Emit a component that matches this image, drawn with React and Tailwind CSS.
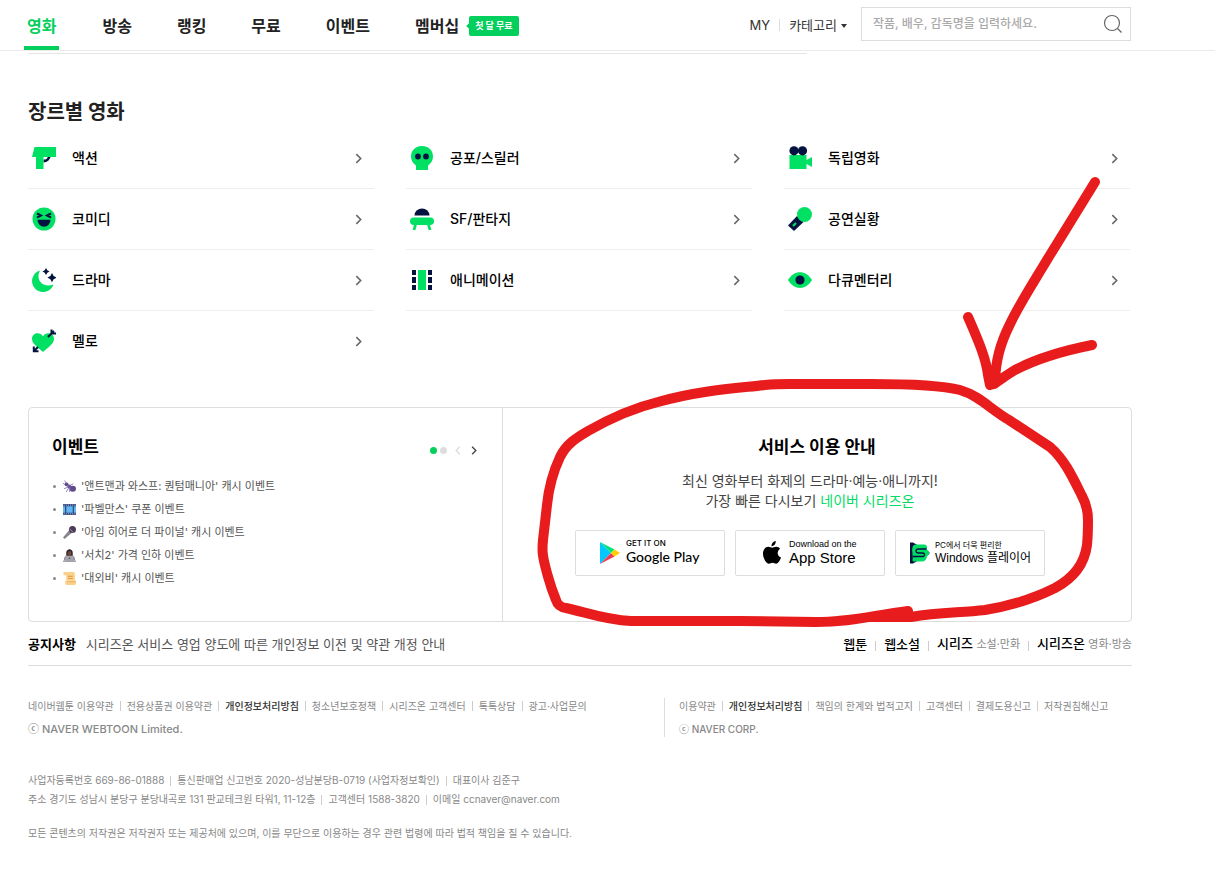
import React from "react";

const navItems = ["방송", "랭킹", "무료", "이벤트"];

const Svg = ({ children, className = "h-6 w-6" }) => (
  <svg viewBox="0 0 24 24" className={className} aria-hidden="true">
    {children}
  </svg>
);

const icons = {
  action: (
    <Svg>
      <path d="M17.500 9.500a6 6 0 0 1-6 5.500" fill="none" stroke="#03123f" strokeWidth="2.800" />
      <path d="M2.500 1H24v10H11.500v12H4V11H0z" fill="#00e164" />
    </Svg>
  ),
  comedy: (
    <Svg>
      <circle cx="12" cy="12" r="11.500" fill="#00e164" />
      <path d="M5.500 12.800h13a6.500 7 0 0 1-13 0z" fill="#03123f" />
      <path d="M5 6.500l4 2-4 2M19 6.500l-4 2 4 2" fill="none" stroke="#03123f" strokeWidth="2" />
    </Svg>
  ),
  drama: (
    <Svg>
      <path d="M8 2.500a11 11 0 1 0 13.500 14C11 20.500 3 12 8 2.500z" fill="#00e164" />
      <path d="M14 0l1.300 2.200L17.500 3.500l-2.200 1.300L14 7l-1.300-2.200-2.200-1.300 2.200-1.300zM20 5l1.600 3 3 1.600-3 1.600-1.600 3-1.600-3-3-1.600 3-1.600z" fill="#03123f" />
    </Svg>
  ),
  melo: (
    <Svg>
      <path d="M11 23C6 18.500 0 15 0 9.800c0-6 8-7.500 11-2.500C14 2.300 22 3.800 22 9.800c0 5.200-6 8.700-11 13.200z" fill="#00e164" />
      <path d="M16 8l6-6M19.500 0.500v4H24M6 18l-4 4M1.800 17.500v4.700h4.700" fill="none" stroke="#03123f" strokeWidth="2" />
    </Svg>
  ),
  horror: (
    <Svg>
      <path d="M12 0c6.500 0 11 4.500 11 10.500 0 4-2 7-5 9V24H6v-4.500c-3-2-5-5-5-9C1 4.500 5.500 0 12 0z" fill="#00e164" />
      <circle cx="8" cy="10.500" r="2.900" fill="#03123f" />
      <circle cx="16" cy="10.500" r="2.900" fill="#03123f" />
    </Svg>
  ),
  sf: (
    <Svg>
      <path d="M4.500 8.500a7.500 7 0 0 1 15 0z" fill="#03123f" />
      <rect x="0" y="10.500" width="24" height="7.500" rx="3.750" fill="#00e164" />
      <path d="M5.800 16.500L4 23M18.200 16.500L20 23" stroke="#00e164" strokeWidth="2.800" />
    </Svg>
  ),
  animation: (
    <Svg>
      <path d="M8 2h8v20H8z" fill="#00e164" />
      <path d="M2 2h4v5H2zM2 9h4v6H2zM2 17h4v5H2zM18 2h4v5h-4zM18 9h4v6h-4zM18 17h4v5h-4z" fill="#03123f" />
    </Svg>
  ),
  indie: (
    <Svg>
      <path d="M1.500 9h17v5L24 11v10l-5.500-3v5h-17z" fill="#00e164" />
      <circle cx="6" cy="4.800" r="4.600" fill="#03123f" />
      <circle cx="14.500" cy="4.800" r="4.600" fill="#03123f" />
    </Svg>
  ),
  concert: (
    <Svg>
      <path d="M0 18.500L9 9l6.500 6L6 24z" fill="#03123f" />
      <path d="M5 19l3-3" stroke="#00e164" strokeWidth="2.200" />
      <circle cx="16.500" cy="7.500" r="7.500" fill="#00e164" />
    </Svg>
  ),
  documentary: (
    <Svg>
      <path d="M0 12C6 1.500 18 1.500 24 12 18 22.500 6 22.500 0 12z" fill="#00e164" />
      <circle cx="12" cy="12" r="4.600" fill="#03123f" />
    </Svg>
  ),
};

const genres = [
  { name: "액션", icon: "action" },
  { name: "공포/스릴러", icon: "horror" },
  { name: "독립영화", icon: "indie" },
  { name: "코미디", icon: "comedy" },
  { name: "SF/판타지", icon: "sf" },
  { name: "공연실황", icon: "concert" },
  { name: "드라마", icon: "drama" },
  { name: "애니메이션", icon: "animation" },
  { name: "다큐멘터리", icon: "documentary" },
  { name: "멜로", icon: "melo" },
];

const events = [
  {
    text: "'앤트맨과 와스프: 퀀텀매니아' 캐시 이벤트",
    icon: (
      <>
        <circle cx="6.500" cy="8" r="3.500" fill="#5f4b8b" />
        <circle cx="11.500" cy="12" r="3.500" fill="#6b559b" />
        <ellipse cx="18" cy="16" rx="6" ry="5.500" fill="#5f4b8b" />
        <path d="M6 6L3 1M3 8L0 6M10 13l-8 3M11 14l-5 8M13 14l-1 8M13 10l6-3" fill="none" stroke="#7d6ba6" strokeWidth="1.500" />
      </>
    ),
  },
  {
    text: "'파벨만스' 쿠폰 이벤트",
    icon: (
      <>
        <path d="M0 2h24v20H0z" fill="#283c78" />
        <path d="M6 6h12v12H6zM0 6h4v12H0zM20 6h4v12h-4z" fill="#62b5ee" />
        <path d="M1 4h22M1 20h22" stroke="#d9e8f5" strokeWidth="1.500" strokeDasharray="2 2" />
      </>
    ),
  },
  {
    text: "'아임 히어로 더 파이널' 캐시 이벤트",
    icon: (
      <>
        <path d="M0 21L12 7l5 5L3 24z" fill="#8b8590" />
        <circle cx="17.500" cy="6.500" r="6.500" fill="#4b3b58" />
        <path d="M12 5l7 7" stroke="#b8aec2" strokeWidth="1.500" />
      </>
    ),
  },
  {
    text: "'서치2' 가격 인하 이벤트",
    icon: (
      <>
        <path d="M2 21c0-8 3-10 10-10s10 2 10 10z" fill="#77747f" />
        <path d="M6 12V7c0-9 12-9 12 0v5z" fill="#2e2528" />
        <ellipse cx="12" cy="8" rx="3.500" ry="4.500" fill="#70483a" />
        <path d="M4 13h16v8H4zM0 21h24v3H0z" fill="#a5a3ad" />
        <circle cx="12" cy="17" r="1.500" fill="#4f4d58" />
      </>
    ),
  },
  {
    text: "'대외비' 캐시 이벤트",
    icon: (
      <>
        <path d="M1 0h18c3 0 3 3 3 5v11H6V6H1z" fill="#fbd08b" />
        <path d="M4 16h20v4c0 3-1 4-3 4H8c-3 0-4-1-4-4z" fill="#fbd08b" />
        <path d="M9 8h9M9 12h9" stroke="#e2a04c" strokeWidth="2" />
        <path d="M8 18h16" stroke="#efb463" strokeWidth="2" />
      </>
    ),
  },
];

const Chevron = ({ className, left }) => (
  <svg viewBox="0 0 8 12" className={className} aria-hidden="true">
    <path d={left ? "M6.500 1L1.500 6l5 5" : "M1.500 1l5 5-5 5"} fill="none" stroke="currentColor" strokeWidth="1.800" />
  </svg>
);

function Header() {
  return (
    <header className="flex h-[51px] items-center border-b border-[#ebebeb] pr-[84px] pl-6">
      <nav className="flex h-full items-center text-[16px] font-bold text-[#222]">
        <a href="#movie" className="mr-[43px] flex h-full items-center border-b-4 border-[#03cf5d] px-[3px] pt-1.5 text-[#03cf5d]">
          영화
        </a>
        {navItems.map((item) => (
          <a key={item} href="#nav" className="mr-[45px] pt-0.5">
            {item}
          </a>
        ))}
        <a href="#membership" className="pt-0.5">멤버십</a>
        <span className="relative mt-0.5 ml-[10px] flex h-5 items-center rounded-xs bg-[#03cf5d] px-[6px] text-[9px] text-white">
          <i className="absolute -left-0.5 h-1 w-1 rotate-45 bg-[#03cf5d]" />
          첫 달 무료
        </span>
      </nav>
      <div className="ml-auto flex items-center text-[13px] text-[#333]">
        <a href="#my" className="pt-0.5">MY</a>
        <span className="mx-[9px] h-3 w-px bg-[#ddd]" />
        <button className="flex items-center gap-1 pt-0.5">
          카테고리
          <svg viewBox="0 0 6 4" className="h-1 w-1.5" aria-hidden="true">
            <path d="M0 0h6L3 4z" fill="#333" />
          </svg>
        </button>
        <form className="mb-0.5 ml-[14px] flex h-[34px] w-[270px] items-center border border-[#ddd] px-[11px]">
          <input
            type="text"
            aria-label="검색"
            placeholder="작품, 배우, 감독명을 입력하세요."
            className="min-w-0 flex-1 text-[12px] font-medium outline-none placeholder:text-[#aaa]"
          />
          <button type="button" aria-label="검색하기" className="-mr-1">
            <svg viewBox="0 0 20 20" className="h-5 w-5" fill="none" stroke="#666" strokeWidth="1.200">
              <circle cx="9" cy="9" r="7.500" />
              <path d="M14.500 14.500L18.500 18.500" />
            </svg>
          </button>
        </form>
      </div>
    </header>
  );
}

function Genres() {
  return (
    <section>
      <h2 className="pt-[43px] text-[20px] leading-[30px] font-bold text-[#222]">장르별 영화</h2>
      <ul className="mt-px mr-0.5 grid grid-cols-3 gap-x-8">
        {genres.map((genre) => (
          <li key={genre.name} className="border-b border-[#eee] last:border-transparent">
            <a href="#genre" className="flex h-[60px] items-center pr-3 pl-1 text-[14px] font-medium text-black">
              {icons[genre.icon]}
              <span className="ml-4 pb-0.5">{genre.name}</span>
              <Chevron className="ml-auto h-[11px] w-[7px] text-[#666]" />
            </a>
          </li>
        ))}
      </ul>
    </section>
  );
}

function EventBox() {
  return (
    <div className="w-[43%] border-r border-[#ddd] pt-[25px] pr-[25px] pl-[23px]">
      <div className="flex items-center justify-between">
        <h2 className="text-[17px] leading-7 font-bold text-black">이벤트</h2>
        <div className="mt-1.5 flex items-center">
          <span className="h-[7px] w-[7px] rounded-full bg-[#03cf5d]" />
          <span className="ml-[3px] h-[7px] w-[7px] rounded-full bg-[#ddd]" />
          <button aria-label="이전" className="ml-2 text-[#ddd]">
            <Chevron left className="h-[9px] w-1.5" />
          </button>
          <button aria-label="다음" className="ml-[10px] text-[#444]">
            <Chevron className="h-[9px] w-1.5" />
          </button>
        </div>
      </div>
      <ul className="mt-[14px] text-[11px] leading-[23px] text-[#555]">
        {events.map((event) => (
          <li key={event.text} className="flex items-center pl-px">
            <span className="h-[3px] w-[3px] rounded-full bg-[#888]" />
            <Svg className="mr-[5px] ml-[7px] h-[13px] w-[13px]">{event.icon}</Svg>
            <a href="#event">{event.text}</a>
          </li>
        ))}
      </ul>
    </div>
  );
}

function ServiceBox() {
  const button = "flex h-[46px] w-[150px] items-center rounded-xs border border-[#ddd] whitespace-nowrap text-black";
  return (
    <div className="flex-1 pt-[25px] text-center">
      <h2 className="text-[17px] leading-7 font-bold text-black">서비스 이용 안내</h2>
      <div className="pr-[14px]">
        <p className="mt-[10px] text-[14px] leading-5 text-[#444]">
          최신 영화부터 화제의 드라마·예능·애니까지!
          <br />
          가장 빠른 다시보기 <a href="#serieson" className="text-[#00dc64]">네이버 시리즈온</a>
        </p>
        <div className="mt-[19px] flex justify-center gap-[10px] text-left">
          <a href="#google" className={`${button} pl-6`}>
            <svg viewBox="0 0 20 24" className="h-6 w-5" aria-hidden="true">
              <path d="M0 1L11 12 0 23z" fill="#00c8ff" />
              <path d="M0 1L14.500 8.500 11 12z" fill="#00e27a" />
              <path d="M0 23L14.500 15.500 11 12z" fill="#f23b52" />
              <path d="M14.500 8.500L20 12l-5.500 3.500L11 12z" fill="#ffce00" />
            </svg>
            <span className="ml-1.5 pb-1">
              <span className="block text-[8px] leading-[10px] font-medium">GET IT ON</span>
              <span className="block font-['Lato'] text-[14px] leading-[17px] font-medium">Google Play</span>
            </span>
          </a>
          <a href="#apple" className={`${button} pl-[27px]`}>
            <svg viewBox="0 0 18 24" className="h-6 w-[18px]" aria-hidden="true">
              <path d="M12.800 0c.2 2.800-1.800 5.200-4.200 5.200C8.300 2.600 10.500.300 12.800 0zM9.300 6.700c1 0 2-1.100 4-1 1.600.1 3 .8 3.800 2-3.700 2.400-2.900 7.400.9 8.800-.8 2.400-2.600 6.200-4.900 6.200-1.400 0-1.900-.9-3.600-.9s-2.300.9-3.600.9C3.200 22.700 0 17.300 0 12.800c0-4.200 2.500-7 5.300-7 1.700 0 3 .9 4 .9z" />
            </svg>
            <span className="ml-2 pb-0.5 font-['Liberation_Sans']">
              <span className="block text-[9px] leading-[10px]">Download on the</span>
              <span className="block text-[15px] leading-[17px]">App Store</span>
            </span>
          </a>
          <a href="#windows" className={`${button} pl-[14px]`}>
            <svg viewBox="0 0 20 24" className="h-6 w-5" aria-hidden="true">
              <path d="M0 1.500h3l15.500 9q2 1.500 0 3L3 22.500H0z" fill="#03123f" />
              <path d="M6 3.500h8q3 0 3 3v2l2.500 3.500-2.500 3.500q-1 5-5 5H3q-1-2 0-4h-.500v-4Q1 3.500 6 3.500z" fill="#00dc64" />
              <path d="M16.500 8H8.500q-2.500 0-2.500 2t2.500 2h4q2 0 2 1.800t-2 1.700H2.500" fill="none" stroke="#03123f" strokeWidth="1.300" />
            </svg>
            <span className="ml-[5px]">
              <span className="block text-[8px] leading-[10px]">PC에서 더욱 편리한</span>
              <span className="block font-['Liberation_Sans','Noto_Sans_CJK_KR'] text-[12px] leading-[17px]">Windows 플레이어</span>
            </span>
          </a>
        </div>
      </div>
    </div>
  );
}

const Bar = () => <span className="mx-1.5 h-[10px] w-px bg-[#ccc]" />;

function LinkRow({ items, strong }) {
  return (
    <ul className="flex items-center">
      {items.map((item, i) => (
        <li key={item} className="flex items-center">
          {i > 0 && <Bar />}
          <a href="#policy" className={item === strong ? "font-medium text-[#333]" : ""}>
            {item}
          </a>
        </li>
      ))}
    </ul>
  );
}

function Footer() {
  return (
    <footer className="text-[10px] leading-4 text-[#888]">
      <div className="flex pt-8">
        <div className="w-[636px]">
          <LinkRow
            strong="개인정보처리방침"
            items={["네이버웹툰 이용약관", "전용상품권 이용약관", "개인정보처리방침", "청소년보호정책", "시리즈온 고객센터", "톡톡상담", "광고·사업문의"]}
          />
          <p className="mt-[7px] text-[11px] leading-4 font-medium">ⓒ NAVER WEBTOON Limited.</p>
        </div>
        <div className="border-l border-[#ddd] pl-[14px]">
          <LinkRow
            strong="개인정보처리방침"
            items={["이용약관", "개인정보처리방침", "책임의 한계와 법적고지", "고객센터", "결제도용신고", "저작권침해신고"]}
          />
          <p className="mt-[7px] font-medium">ⓒ NAVER CORP.</p>
        </div>
      </div>
      <address className="mt-[34px] leading-[19px] not-italic">
        <LinkRow items={["사업자등록번호 669-86-01888", "통신판매업 신고번호 2020-성남분당B-0719 (사업자정보확인)", "대표이사 김준구"]} />
        <LinkRow items={["주소 경기도 성남시 분당구 분당내곡로 131 판교테크원 타워1, 11-12층", "고객센터 1588-3820", "이메일 ccnaver@naver.com"]} />
      </address>
      <p className="mt-4">
        모든 콘텐츠의 저작권은 저작권자 또는 제공처에 있으며, 이를 무단으로 이용하는 경우 관련 법령에 따라 법적 책임을 질 수 있습니다.
      </p>
    </footer>
  );
}

function Services() {
  return (
    <div className="flex items-center border-b border-[#ddd] pt-[10px] pb-[10px] text-[13px] leading-[22px]">
      <strong className="font-bold text-black">공지사항</strong>
      <a href="#notice" className="ml-[10px] text-[#555]">
        시리즈온 서비스 영업 양도에 따른 개인정보 이전 및 약관 개정 안내
      </a>
      <div className="ml-auto flex items-center font-medium text-black">
        <a href="#webtoon">웹툰</a>
        <span className="mx-2 mt-1 h-[10px] w-px bg-[#ccc]" />
        <a href="#novel">웹소설</a>
        <span className="mx-2 mt-1 h-[10px] w-px bg-[#ccc]" />
        <a href="#series">
          시리즈 <span className="text-[11px] font-normal text-[#888]">소설·만화</span>
        </a>
        <span className="mx-2 mt-1 h-[10px] w-px bg-[#ccc]" />
        <a href="#serieson">
          시리즈온 <span className="text-[11px] font-normal text-[#888]">영화·방송</span>
        </a>
      </div>
    </div>
  );
}

// hand drawn marker lines over the page
function Marker() {
  return (
    <svg
      viewBox="0 0 1215 883"
      className="pointer-events-none absolute top-0 left-0 h-[883px] w-[1215px]"
      fill="none"
      stroke="#e81c1c"
      strokeWidth="10"
      strokeLinecap="round"
      strokeLinejoin="round"
      aria-hidden="true"
    >
      <path d="M1095 182L1050 255C1032 285 1020 303 1010 324C999 346 996 362 995 380M968 317C978 340 986 358 988 375L990 385L994 384C1003 378 1008 374 1015 370C1036 359 1062 351 1092 345" />
      <path d="M991 383L994 376" strokeWidth="12" />
      <path d="M908 611C870 616 850 622 816 622L740 621H631C605 620 585 612 566 608Q558 607 556 600C551 588 549 580 547 573C542 555 542 550 543 540L547 505C549 485 553 472 560 457C567 443 578 437 588 431Q625 410 658 402C700 390 740 388 765 385Q775 384 790 384H872C910 384 940 385 960 390C980 396 990 409 1009 420L1050 447C1065 460 1073 478 1082 496Q1088 507 1088 520Q1088 535 1087 545C1084 568 1070 580 1055 588C1035 598 1010 606 985 610C960 613 940 612 911 617H870" />
    </svg>
  );
}

export default function App() {
  return (
    <div className="relative overflow-x-hidden bg-white pb-10 font-['Inter','Noto_Sans_CJK_KR',sans-serif]">
      <Header />
      <main className="pr-[83px] pl-7">
        <div className="mt-0.5 w-[779px] border-t border-[#e5e5e5]" />
        <Genres />
        <div className="mt-[35px] flex h-[215px] rounded-sm border border-[#ddd]">
          <EventBox />
          <ServiceBox />
        </div>
        <Services />
        <Footer />
      </main>
      <Marker />
    </div>
  );
}
